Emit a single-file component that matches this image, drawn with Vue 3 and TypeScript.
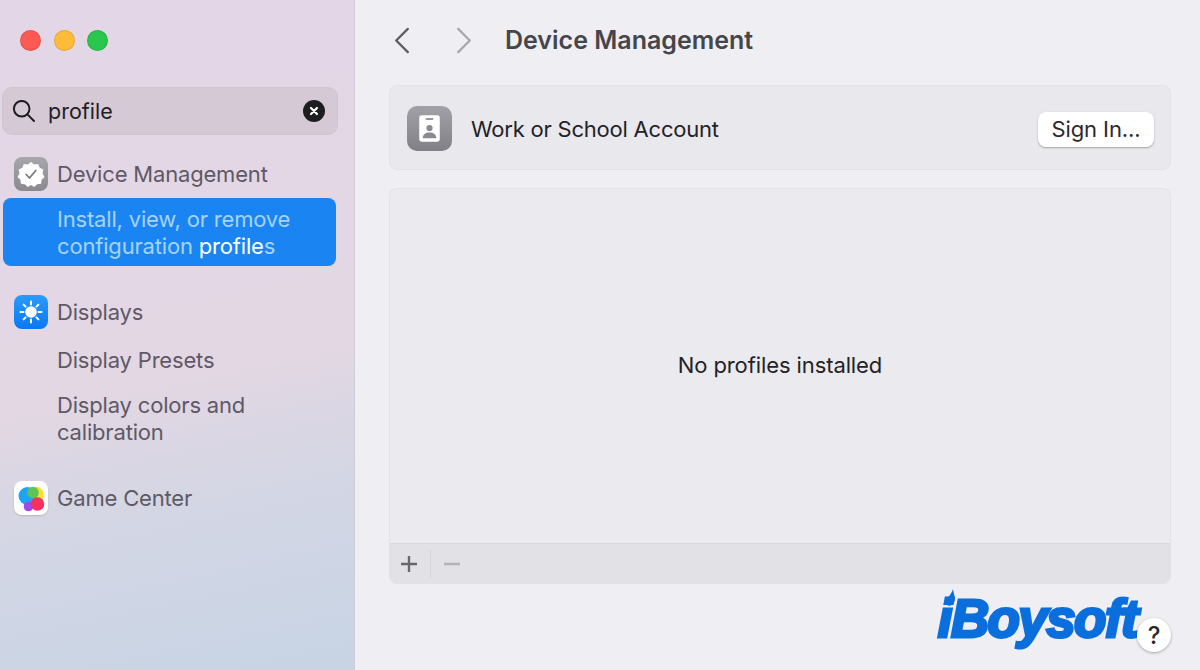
<template>
  <div class="window">
    <aside class="sidebar">
      <div class="traffic">
        <span class="light red"></span>
        <span class="light yellow"></span>
        <span class="light green"></span>
      </div>

      <div class="search">
        <svg class="search-icon" viewBox="1.500 1.500 21.500 21.500" fill="none" stroke="#1d1c20" stroke-width="1.900" stroke-linecap="round">
          <circle cx="10" cy="10" r="7.600" />
          <path d="M15.600 15.600L22 22" />
        </svg>
        <span class="search-text">profile</span>
        <span class="search-clear">
          <svg viewBox="0 0 12 12" fill="none" stroke="#fff" stroke-width="2.200" stroke-linecap="round">
            <path d="M3 3l6 6M9 3l-6 6" />
          </svg>
        </span>
      </div>

      <div class="group group-device">
        <div class="group-head">
          <span class="app-icon icon-device">
            <svg viewBox="0 0 34 34">
              <path
                fill="#fff"
                d="M17 5l3.200 2.400 4-.4 1.500 3.700 3.600 1.800-.8 3.900 2 3.600-2.900 2.700-.5 4-4 .6-2.900 2.800-3.200-2.200-3.200 2.200-2.900-2.800-4-.6-.5-4-2.900-2.700 2-3.600-.8-3.900 3.600-1.800 1.500-3.700 4 .4z"
              />
              <path d="M12.200 17.500l3.300 3.500 6.300-7.500" fill="none" stroke="#77767c" stroke-width="1.700" stroke-linecap="round" stroke-linejoin="round" />
            </svg>
          </span>
          <span class="label">Device Management</span>
        </div>
        <div class="result selected">
          Install, view, or remove<br />configuration <b class="hit">profile</b>s
        </div>
      </div>

      <div class="group group-displays">
        <div class="group-head">
          <span class="app-icon icon-displays">
            <svg viewBox="0 0 34 34" fill="none" stroke="#fff" stroke-width="2" stroke-linecap="round">
              <circle cx="17" cy="17" r="5.800" fill="#fff" stroke="none" />
              <path d="M17 6.500v3M17 24.500v3M6.500 17h3M24.500 17h3M9.600 9.600l2 2M22.400 22.400l2 2M24.400 9.600l-2 2M11.600 22.400l-2 2" />
            </svg>
          </span>
          <span class="label">Displays</span>
        </div>
        <div class="result">Display Presets</div>
        <div class="result result-wrap">Display colors and<br />calibration</div>
      </div>

      <div class="group group-game">
        <div class="group-head">
          <span class="app-icon icon-game">
            <svg viewBox="0 0 34 34">
              <circle cx="22" cy="13.500" r="7.800" fill="#fde02f" />
              <circle cx="13.500" cy="15" r="9" fill="#1ea4f2" />
              <circle cx="19" cy="11.500" r="5.800" fill="#5fc456" />
              <circle cx="14.500" cy="25.500" r="4.800" fill="#a247e8" />
              <circle cx="23.500" cy="23" r="6.800" fill="#f5325f" />
            </svg>
          </span>
          <span class="label">Game Center</span>
        </div>
      </div>
    </aside>

    <main class="content">
      <header class="toolbar">
        <svg class="chevron" viewBox="0 0 16 28" fill="none" stroke="#5f5e64" stroke-width="2.400" stroke-linecap="round" stroke-linejoin="round">
          <path d="M14 2L2 14l12 12" />
        </svg>
        <svg class="chevron forward" viewBox="0 0 16 28" fill="none" stroke="#a9a8ad" stroke-width="2.400" stroke-linecap="round" stroke-linejoin="round">
          <path d="M2 2l12 12L2 26" />
        </svg>
        <h1 class="title">Device Management</h1>
      </header>

      <section class="card account">
        <span class="account-icon">
          <svg viewBox="0 0 46 46">
            <rect x="12.500" y="9.500" width="21" height="27" rx="2.500" fill="#fff" />
            <rect x="19" y="12.500" width="8" height="1.600" rx="0.800" fill="#77767c" />
            <circle cx="23" cy="22.500" r="3.200" fill="#8b8a90" />
            <path d="M16 33c0-4.200 3-6 7-6s7 1.800 7 6z" fill="#8b8a90" />
          </svg>
        </span>
        <span class="account-name">Work or School Account</span>
        <button class="sign-in" type="button">Sign In...</button>
      </section>

      <section class="card profiles">
        <div class="profiles-empty">No profiles installed</div>
        <div class="profiles-bar">
          <svg class="bar-icon" viewBox="0 0 16 16" stroke="#68676c" stroke-width="2.400">
            <path d="M0 8h16M8 0v16" />
          </svg>
          <span class="bar-sep"></span>
          <svg class="bar-icon minus" viewBox="0 0 16 16" stroke="#b4b3b8" stroke-width="2.400">
            <path d="M0 8h16" />
          </svg>
        </div>
      </section>

      <footer class="bottom">
        <div class="logo">
          <svg class="logo-drop" viewBox="0 0 10 18"><path fill="#0a6fdc" d="M7 0C7.500 4 9.500 8 8.500 12 7.800 15.500 4.500 17.500 2 16.500-.5 15 0 11 2.500 8 4.500 5.500 6 3 7 0z" /></svg>
          <span class="logo-text">iBoysoft</span>
        </div>
        <button class="help" type="button">?</button>
      </footer>
    </main>
  </div>
</template>

<script setup lang="ts">
</script>

<style>
  html,
  body {
    margin: 0;
    background: #efeef3;
  }
</style>

<style scoped>
  .window {
    display: flex;
    width: 1200px;
    height: 670px;
    overflow: hidden;
    font-family: Inter, 'Liberation Sans', sans-serif;
    background: #efeef3;
  }

  .sidebar {
    box-sizing: border-box;
    width: 355px;
    flex-shrink: 0;
    padding: 30px 16px 0 2px;
    border-right: 1px solid #cfcdd6;
    background: linear-gradient(168deg, #e3d7e7 0%, #e3d7e6 38%, #e3d7e3 55%, #d3d6e4 74%, #c7d4e4 100%);
  }

  .traffic {
    display: flex;
    gap: 12.500px;
    padding-left: 18px;
  }

  .light {
    box-sizing: border-box;
    width: 21px;
    height: 21px;
    border-radius: 50%;
    border: 1px solid rgba(0, 0, 0, 0.1);
  }

  .red {
    background: #fd5a54;
  }

  .yellow {
    background: #fdbb39;
  }

  .green {
    background: #2ac64d;
  }

  .search {
    box-sizing: border-box;
    display: flex;
    align-items: center;
    height: 48px;
    margin-top: 36px;
    padding: 0 12px 0 10px;
    border: 1px solid #cfc5d2;
    border-radius: 10px;
    background: #d5c9d6;
  }

  .search-icon {
    width: 22px;
    height: 22px;
  }

  .search-text {
    margin-left: 13px;
    font-size: 21.500px;
    color: #1f1e22;
  }

  .search-clear {
    display: flex;
    align-items: center;
    justify-content: center;
    width: 22px;
    height: 22px;
    margin-left: auto;
    border-radius: 50%;
    background: #1e1d20;
  }

  .search-clear svg {
    width: 12px;
    height: 12px;
  }

  .group-device {
    margin-top: 22px;
  }

  .group-displays {
    margin-top: 29px;
  }

  .group-game {
    margin-top: 35px;
  }

  .group-head {
    display: flex;
    align-items: center;
    gap: 9px;
    height: 34px;
    padding-left: 12px;
  }

  .label,
  .result {
    font-size: 22px;
    line-height: 27px;
    color: #5f5966;
    letter-spacing: -0.180px;
  }

  .label {
    padding-top: 1px;
  }

  .app-icon {
    display: block;
    width: 34px;
    height: 34px;
    flex-shrink: 0;
    border-radius: 8px;
  }

  .app-icon svg {
    display: block;
    width: 100%;
    height: 100%;
  }

  .icon-device {
    background: linear-gradient(180deg, #a7a6ab, #8a898f);
  }

  .icon-displays {
    background: linear-gradient(180deg, #2a9bfa, #0a78f2);
  }

  .icon-game {
    background: #fff;
    box-shadow: 0 1px 2px rgba(0, 0, 0, 0.15);
  }

  .result {
    margin-top: 18px;
    padding-left: 55px;
  }

  .selected {
    box-sizing: border-box;
    width: 333px;
    height: 68px;
    margin: 7px 0 0 1px;
    padding: 8px 0 0 54px;
    border-radius: 8px;
    background: #1a85f2;
    color: #a6d3fb;
  }

  .hit {
    font-weight: 400;
    color: #fff;
  }

  .content {
    flex: 1;
    display: flex;
    flex-direction: column;
    min-width: 0;
    padding: 0 29px 0 34px;
  }

  .toolbar {
    display: flex;
    align-items: center;
    height: 80px;
    margin-bottom: 5px;
  }

  .chevron {
    width: 16px;
    height: 27px;
    margin-left: 5px;
  }

  .forward {
    margin-left: 46px;
  }

  .title {
    margin: 0 0 0 33px;
    font-size: 25px;
    font-weight: 600;
    color: #46454a;
  }

  .card {
    box-sizing: border-box;
    border: 1px solid #e3e2e7;
    border-radius: 8px;
    background: #e9e8ed;
  }

  .account {
    display: flex;
    align-items: center;
    height: 85px;
    padding: 1px 16px 0 17px;
  }

  .account-icon {
    width: 45px;
    height: 45px;
    border-radius: 10px;
    background: linear-gradient(180deg, #a2a1a7, #818086);
  }

  .account-icon svg {
    display: block;
    width: 100%;
    height: 100%;
  }

  .account-name {
    margin-left: 19px;
    padding-top: 2px;
    font-size: 22px;
    letter-spacing: -0.220px;
    color: #232226;
  }

  .sign-in {
    width: 116px;
    height: 35px;
    margin: 2px 0 0 auto;
    padding: 0;
    border: none;
    border-radius: 8px;
    background: #fff;
    box-shadow: 0 1px 2px rgba(0, 0, 0, 0.3);
    font: inherit;
    font-size: 22px;
    letter-spacing: -0.100px;
    color: #2a292d;
  }

  .profiles {
    display: flex;
    flex-direction: column;
    height: 396px;
    margin-top: 18px;
    overflow: hidden;
    background: #ebeaef;
  }

  .profiles-empty {
    flex: 1;
    display: flex;
    align-items: center;
    justify-content: center;
    padding-bottom: 3px;
    font-size: 22px;
    letter-spacing: -0.100px;
    color: #232226;
  }

  .profiles-bar {
    box-sizing: border-box;
    display: flex;
    align-items: center;
    height: 40px;
    padding: 0 0 0 11px;
    border-top: 1px solid #d8d7dc;
    background: #e2e1e6;
  }

  .bar-icon {
    width: 16px;
    height: 16px;
  }

  .minus {
    margin-left: 13px;
  }

  .bar-sep {
    width: 1px;
    height: 28px;
    margin-left: 13px;
    background: #d4d3d8;
  }

  .bottom {
    flex: 1;
    display: flex;
    justify-content: flex-end;
    align-items: flex-start;
  }

  .logo {
    position: relative;
    margin-top: 9px;
    line-height: 1;
  }

  .logo-text {
    display: block;
    font-family: 'Liberation Sans', Arial, sans-serif;
    font-size: 53px;
    font-weight: 700;
    font-style: italic;
    letter-spacing: -1.600px;
    line-height: 52px;
    color: #0a6fdc;
    -webkit-text-stroke: 3px #0a6fdc;
  }

  .logo-drop {
    position: absolute;
    left: 8px;
    top: -4px;
    width: 10px;
    height: 18px;
  }

  .help {
    width: 34px;
    height: 34px;
    margin: 34px 0 0 0;
    padding: 0;
    position: relative;
    border: none;
    border-radius: 50%;
    background: #fff;
    box-shadow: 0 1px 3px rgba(0, 0, 0, 0.3);
    font: inherit;
    font-size: 24px;
    font-weight: 500;
    color: #29282c;
  }
</style>
